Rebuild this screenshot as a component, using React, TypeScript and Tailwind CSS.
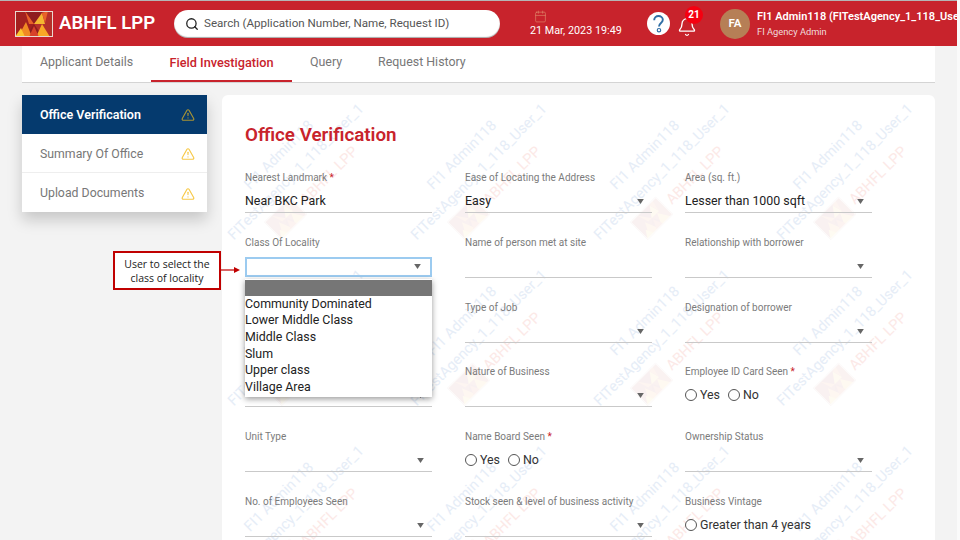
import { Bell, Calendar, Search, TriangleAlert } from "lucide-react";

type Field = {
  label?: string;
  required?: boolean;
  kind: "select" | "text" | "radio" | "vintage" | "focus";
  value?: string;
};

const fields: Field[] = [
  { label: "Nearest Landmark", required: true, kind: "text", value: "Near BKC Park" },
  { label: "Ease of Locating the Address", kind: "select", value: "Easy" },
  { label: "Area (sq. ft.)", kind: "select", value: "Lesser than 1000 sqft" },
  { label: "Class Of Locality", kind: "focus" },
  { label: "Name of person met at site", kind: "text" },
  { label: "Relationship with borrower", kind: "select" },
  { kind: "select" },
  { label: "Type of Job", kind: "select" },
  { label: "Designation of borrower", kind: "select" },
  { kind: "select" },
  { label: "Nature of Business", kind: "select" },
  { label: "Employee ID Card Seen", required: true, kind: "radio" },
  { label: "Unit Type", kind: "select" },
  { label: "Name Board Seen", required: true, kind: "radio" },
  { label: "Ownership Status", kind: "select" },
  { label: "No. of Employees Seen", kind: "select" },
  { label: "Stock seen & level of business activity", kind: "select" },
  { label: "Business Vintage", kind: "vintage" },
];

const localityOptions = [
  "Community Dominated",
  "Lower Middle Class",
  "Middle Class",
  "Slum",
  "Upper class",
  "Village Area",
];

function Logo({ className }: { className?: string }) {
  return (
    <svg viewBox="0 0 38 26" className={className}>
      <rect width="38" height="26" fill="#8f1d1f" />
      <polygon points="0,0 10,0 19,13 10,26 0,26" fill="#a3201f" />
      <polygon points="38,0 28,0 19,13 28,26 38,26" fill="#b5302a" />
      <polygon points="10,0 19,13 14,13" fill="#e8622a" />
      <polygon points="3,26 11,11 17,26" fill="#f08a24" />
      <polygon points="0,26 6,17 10,26" fill="#fcc52f" />
      <polygon points="19,13 27,2 30,13" fill="#f4b731" />
      <polygon points="21,26 27,13 35,26" fill="#f9a826" />
      <polygon points="27,2 33,0 30,12" fill="#e8622a" />
      <polygon points="14,26 19,15 24,26" fill="#d8412a" />
      <rect x="0.5" y="0.5" width="37" height="25" fill="none" stroke="#e9d9d0" />
    </svg>
  );
}

function Watermark() {
  return (
    <div className="flex h-full w-full items-center justify-center">
      <div className="flex w-[210px] shrink-0 -rotate-45 flex-col items-center whitespace-nowrap text-[14.6px] leading-[24px] text-[#e6edf7]">
        <span>FI1 Admin118</span>
        <span>FITestAgency_1_118_User_1</span>
        <span className="flex items-center gap-[6px] text-[#fce9e7]">
          <Logo className="h-[28px] w-[36px] opacity-[0.06]" />
          ABHFL LPP
        </span>
      </div>
    </div>
  );
}

function Arrow() {
  return (
    <svg viewBox="0 0 8 6" className="h-[5px] w-[7px] shrink-0">
      <polygon points="0,0 8,0 4,6" fill="#666666" />
    </svg>
  );
}

function Radio({ label }: { label: string }) {
  return (
    <span className="flex items-center gap-[3px]">
      <span className="h-[12px] w-[12px] rounded-full border border-[#555555] bg-white" />
      <span>{label}</span>
    </span>
  );
}

function FormField({ field }: { field: Field }) {
  return (
    <div className="relative h-[64.8px]">
      <div className="h-[16px] text-[10px] leading-[16px] text-[#7b7b7b]">
        {field.label}
        {field.required && <span className="text-[#c8232c]"> *</span>}
      </div>
      {field.kind === "text" && (
        <div className="flex h-[27px] items-center border-b border-[#c9c9c9] pt-[5px] text-[12.4px] text-[#222222]">
          {field.value}
        </div>
      )}
      {field.kind === "select" && (
        <div className="flex h-[27px] items-center justify-between border-b border-[#c9c9c9] pr-[8px] pt-[5px] text-[12.4px] text-[#222222]">
          <span>{field.value}</span>
          <Arrow />
        </div>
      )}
      {field.kind === "focus" && (
        <>
          <div className="mt-[6px] flex h-[20px] items-center justify-end border-2 border-[#9ccbf0] pr-[9px]">
            <Arrow />
          </div>
          <div className="absolute left-0 top-[44px] z-20 w-[187px] bg-white pb-[2px] pt-px text-[12.4px] leading-[16.6px] text-[#222222] shadow-[0_2px_6px_rgba(0,0,0,0.4)]">
            <div className="h-[16px] bg-[#767676]" />
            {localityOptions.map((option) => (
              <div key={option}>{option}</div>
            ))}
          </div>
        </>
      )}
      {field.kind === "radio" && (
        <div className="flex h-[27px] items-center gap-[8px] pt-[3px] text-[12.4px] text-[#333333]">
          <Radio label="Yes" />
          <Radio label="No" />
        </div>
      )}
      {field.kind === "vintage" && (
        <div className="flex h-[27px] items-center pt-[3px] text-[12.4px] text-[#333333]">
          <Radio label="Greater than 4 years" />
        </div>
      )}
    </div>
  );
}

function Header() {
  return (
    <header className="flex h-[46px] shrink-0 items-center overflow-hidden border-t border-[#b5b5b5] bg-[#c8232c] pl-[15px] text-white">
      <Logo className="h-[26px] w-[38px] shrink-0" />
      <div className="ml-[6px] w-[115px] shrink-0 text-[18.6px] font-semibold">ABHFL LPP</div>
      <div className="flex h-[28px] w-[326px] shrink-0 items-center rounded-full bg-white pl-[11px] text-[11.6px] text-[#555555] shadow-[inset_0_-1px_1px_rgba(0,0,0,0.35)]">
        <Search size={14} strokeWidth={2.2} className="text-[#222222]" />
        <span className="ml-[5px]">Search (Application Number, Name, Request ID)</span>
      </div>
      <div className="ml-[30px] flex w-[117px] shrink-0 flex-col whitespace-nowrap text-[10.8px] leading-[13px]">
        <Calendar size={13} strokeWidth={1.2} className="ml-[4px] text-[#e08a6a]" />
        <span className="mt-px">21 Mar, 2023 19:49</span>
      </div>
      <svg viewBox="0 0 24 24" className="h-[23px] w-[23px] shrink-0">
        <circle cx="12" cy="12" r="12" fill="#ffffff" />
        <path
          d="M7.5 8.5c0-2.6 2-4.3 4.500-4.300s4.500 1.700 4.500 4c0 3.300-4 3.300-4 7"
          fill="none"
          stroke="#2f6ea5"
          strokeWidth="2"
        />
        <circle cx="12.500" cy="19" r="1.800" fill="none" stroke="#2f6ea5" strokeWidth="1.200" />
      </svg>
      <div className="relative ml-[7px] h-[24px] w-[20px] shrink-0 pt-[5px]">
        <Bell size={20} strokeWidth={1.6} />
        <span className="absolute left-[8px] top-[-6px] flex h-[18px] w-[18px] items-center justify-center rounded-full bg-[#f50010] text-[10px] font-bold">
          21
        </span>
      </div>
      <div className="ml-[23px] flex h-[30px] w-[30px] shrink-0 items-center justify-center rounded-full bg-[#b67f56] text-[11.5px] font-semibold">
        FA
      </div>
      <div className="ml-[7px] shrink-0 whitespace-nowrap">
        <div className="text-[11px] font-semibold leading-[15px]">FI1 Admin118 (FITestAgency_1_118_User_1)</div>
        <div className="mt-[1px] text-[9.3px] leading-[13px] text-[#f0dcdc]">FI Agency Admin</div>
      </div>
    </header>
  );
}

function Tabs() {
  return (
    <nav className="ml-[22px] flex h-[37px] w-[913px] shrink-0 border-b border-[#d4d4d4] bg-white pl-[18px] text-[12.4px] text-[#777777]">
      <div className="flex h-[36px] w-[111px] items-center pb-[3px]">Applicant Details</div>
      <div className="flex h-[36px] w-[141px] items-center justify-center border-b-2 border-[#c8232c] pb-[1px] text-[12.7px] font-medium text-[#c8232c]">
        Field Investigation
      </div>
      <div className="ml-[18px] flex h-[36px] items-center pb-[3px]">Query</div>
      <div className="ml-[36px] flex h-[36px] items-center pb-[3px]">Request History</div>
    </nav>
  );
}

function SideMenu() {
  return (
    <aside className="w-[185px] shrink-0 self-start bg-white text-[12.3px] text-[#777777] shadow-[0_8px_14px_rgba(0,0,0,0.18)]">
      <div className="flex h-[39px] items-center justify-between bg-[#053a6e] pl-[18px] pr-[12px] text-[12.5px] font-semibold text-white">
        <span className="pt-px">Office Verification</span>
        <TriangleAlert size={14} className="text-[#a89335]" />
      </div>
      <div className="flex h-[39px] items-center justify-between border-b border-[#eeeeee] pl-[18px] pr-[12px] pt-[2px]">
        Summary Of Office
        <TriangleAlert size={14} className="text-[#f7c948]" />
      </div>
      <div className="flex h-[39px] items-center justify-between pl-[18px] pr-[12px] pt-[2px]">
        Upload Documents
        <TriangleAlert size={14} className="text-[#f7c948]" />
      </div>
    </aside>
  );
}

export default function App() {
  return (
    <div className="relative flex h-[540px] w-[960px] overflow-hidden bg-[#f3f3f3] font-['Roboto',sans-serif]">
      <div className="flex w-[957px] shrink-0 flex-col">
        <Header />
        <Tabs />
        <div className="ml-[22px] mt-[12px] flex gap-[15px]">
          <SideMenu />
          <main className="relative h-[500px] w-[713px] shrink-0 overflow-hidden rounded-t-md bg-white pl-[23px] pt-[26px]">
            <div className="absolute -left-[17px] -top-[2px] grid grid-cols-[repeat(4,183px)] grid-rows-[160px_172px_180px]">
              {Array.from({ length: 12 }, (_, i) => (
                <Watermark key={i} />
              ))}
            </div>
            <div className="relative">
              <h1 className="h-[28px] text-[18.8px] font-semibold leading-[28px] text-[#c8232c]">Office Verification</h1>
              <div className="mt-[21px] grid w-[627px] grid-cols-[repeat(3,187px)] gap-x-[33px]">
                {fields.map((field, i) => (
                  <FormField key={i} field={field} />
                ))}
              </div>
            </div>
          </main>
        </div>
      </div>
      <div className="flex-1 bg-[#fafafa]" />

      {/* callout sitting over the page */}
      <div className="absolute left-[113px] top-[251px] flex h-[39px] w-[108px] items-center justify-center border-2 border-[#c00000] bg-white text-center font-['Open_Sans',sans-serif] text-[10.5px] leading-[14px] text-[#222222]">
        User to select the
        <br />
        class of locality
      </div>
      <svg viewBox="0 0 20 8" className="absolute left-[220px] top-[266px] h-[8px] w-[20px]">
        <line x1="0" y1="4" x2="15" y2="4" stroke="#c00000" strokeWidth="1.2" />
        <polygon points="14,1 20,4 14,7" fill="#c00000" />
      </svg>
    </div>
  );
}
